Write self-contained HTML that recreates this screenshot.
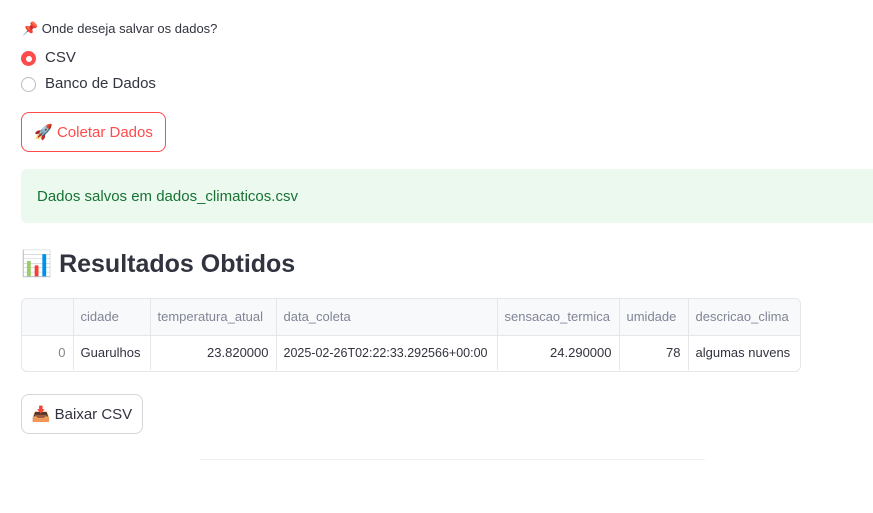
<html><head><style>
body{margin:0;background:#fff;font-family:"Liberation Sans",sans-serif;color:#31333f;width:873px;height:513px;overflow:hidden;position:relative}
.a{position:absolute}
.r{width:15px;height:15px;border-radius:50%;box-sizing:border-box}
table{border-collapse:collapse;font-size:13px;table-layout:fixed}
td{border-right:1px solid #e6e6ea;padding:0 7px;height:35px;white-space:nowrap;overflow:hidden}
td:last-child{border-right:none}
tr.h td{background:#f8f9fb;color:#808495;height:36px;border-bottom:1px solid #e6e6ea}
</style></head><body>
<div class="a" style="left:22px;top:21px;font-size:13px">📌 Onde deseja salvar os dados?</div>
<div class="a r" style="left:21px;top:51px;background:#ff4b4b;display:flex;align-items:center;justify-content:center"><div style="width:6px;height:6px;background:#fff;border-radius:50%"></div></div>
<div class="a" style="left:45px;top:49px;font-size:15px">CSV</div>
<div class="a r" style="left:21px;top:77px;border:1px solid #bbb"></div>
<div class="a" style="left:45px;top:75px;font-size:15px">Banco de Dados</div>
<div class="a" style="left:21px;top:112px;width:143px;height:38px;border:1px solid #ff4b4b;border-radius:8px;color:#ff4b4b;font-size:15px;line-height:40px;text-align:center">🚀 Coletar Dados</div>
<div class="a" style="left:21px;top:169px;width:860px;height:54px;background:#ecf9ef;border-radius:6px;color:#177233;font-size:15px;line-height:55px;padding-left:16px;box-sizing:border-box">Dados salvos em dados_climaticos.csv</div>
<div class="a" style="left:21px;top:250px;font-size:25px;font-weight:bold">📊 Resultados Obtidos</div>
<div class="a" style="left:21px;top:298px;width:778px;height:72px;border:1px solid #e6e6ea;border-radius:6px;overflow:hidden">
<table style="width:779px">
<colgroup><col style="width:51px"><col style="width:77px"><col style="width:126px"><col style="width:221px"><col style="width:122px"><col style="width:69px"><col></colgroup>
<tr class="h"><td></td><td>cidade</td><td>temperatura_atual</td><td>data_coleta</td><td>sensacao_termica</td><td>umidade</td><td>descricao_clima</td></tr>
<tr><td style="text-align:right;color:#808495">0</td><td>Guarulhos</td><td style="text-align:right">23.820000</td><td style="font-size:12.5px">2025-02-26T02:22:33.292566+00:00</td><td style="text-align:right">24.290000</td><td style="text-align:right">78</td><td>algumas nuvens</td></tr>
</table></div>
<div class="a" style="left:21px;top:394px;width:120px;height:38px;border:1px solid #d6d6d9;border-radius:8px;font-size:15px;line-height:40px;text-align:center">📥 Baixar CSV</div>
<div class="a" style="left:200px;top:459px;width:505px;height:1px;background:#f0f0f2"></div>
</body></html>
